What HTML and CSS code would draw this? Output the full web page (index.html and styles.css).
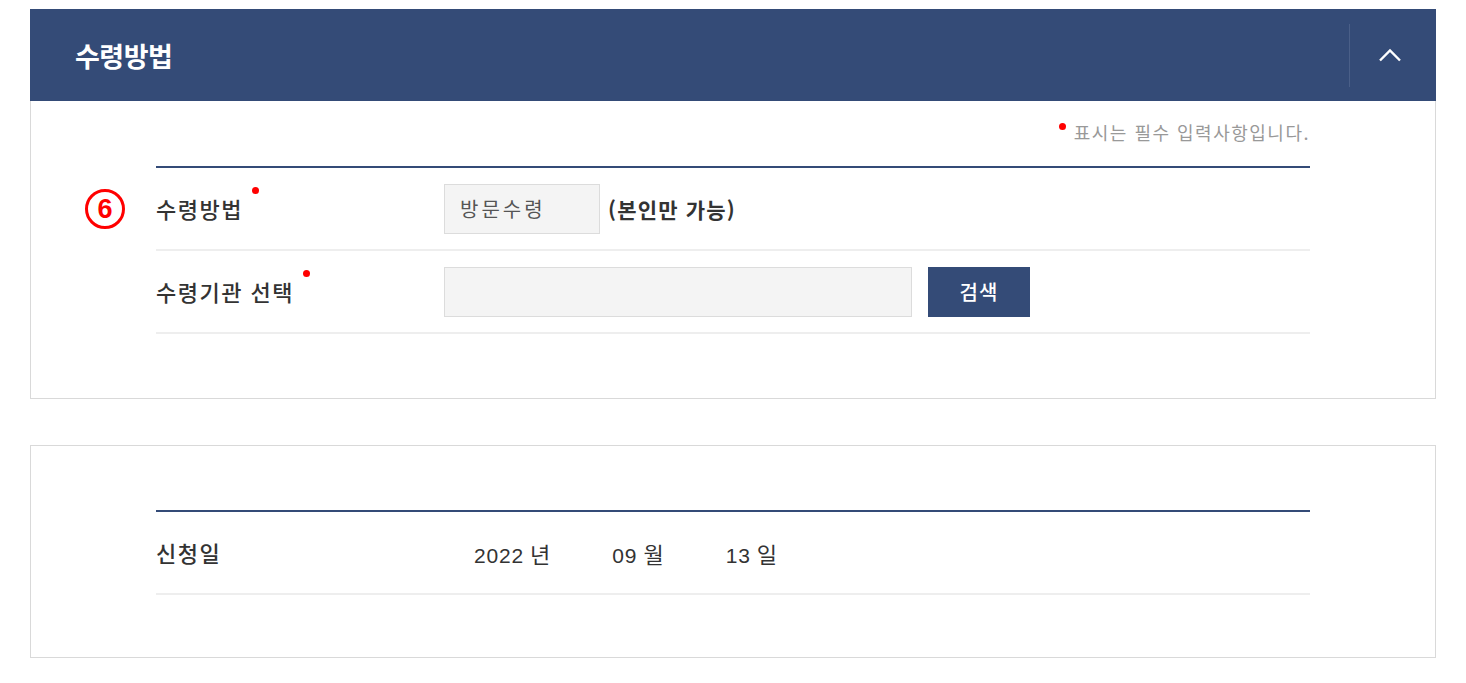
FILE: index.html
```html
<!DOCTYPE html>
<html lang="ko">
<head>
<meta charset="utf-8">
<title>수령방법</title>
<link rel="stylesheet" href="styles.css">
</head>
<body>
<div class="page">
  <section class="panel">
    <header class="panel-head">
      <h2 class="panel-title">수령방법</h2>
      <button class="toggle" type="button" aria-label="접기">
        <svg width="24" height="14" viewBox="0 0 24 14"><path d="M2 12.5 L12 2.5 L22 12.5" fill="none" stroke="#fff" stroke-width="2.4"/></svg>
      </button>
    </header>
    <div class="panel-body">
      <p class="notice"><span class="req"></span>표시는 필수 입력사항입니다.</p>
      <div class="form-table">
        <div class="row">
          <span class="step">6</span>
          <div class="label">수령방법<span class="req"></span></div>
          <div class="value">
            <div class="field field-sm">방문수령</div>
            <span class="hint">(본인만 가능)</span>
          </div>
        </div>
        <div class="row">
          <div class="label">수령기관 선택<span class="req"></span></div>
          <div class="value">
            <div class="field field-lg"></div>
            <button class="btn" type="button">검색</button>
          </div>
        </div>
      </div>
    </div>
  </section>

  <section class="panel panel-plain">
    <div class="panel-body">
      <div class="form-table">
        <div class="row">
          <div class="label">신청일</div>
          <div class="value date">
            <span class="date-part"><span class="num">2022</span> 년</span>
            <span class="date-part"><span class="num">09</span> 월</span>
            <span class="date-part"><span class="num">13</span> 일</span>
          </div>
        </div>
      </div>
    </div>
  </section>
</div>
</body>
</html>
```

FILE: styles.css
```css
* { box-sizing: border-box; }
body {
  margin: 0;
  background: #fff;
  font-family: "Noto Sans CJK KR", "Noto Sans", sans-serif;
  color: #333;
}
.page {
  padding: 9px 30px 0 30px;
  display: flex;
  flex-direction: column;
  gap: 46px;
}
.panel {
  border: 1px solid #d9d9d9;
  border-top: none;
  background: #fff;
}
.panel-plain {
  border-top: 1px solid #d9d9d9;
}
.panel-head {
  height: 92px;
  background: #344b77;
  display: flex;
  align-items: center;
  justify-content: space-between;
  padding-left: 45px;
  margin: 0 -1px;
}
.panel-title {
  margin: 0;
  color: #fff;
  font-size: 27px;
  font-weight: 700;
  letter-spacing: -0.5px;
}
.toggle {
  width: 87px;
  height: 63px;
  border: none;
  border-left: 1px solid #4a5f88;
  background: transparent;
  display: flex;
  align-items: center;
  justify-content: center;
  padding: 0 7px 0 0;
  cursor: pointer;
}
.panel-body {
  padding: 0 125px 64px 125px;
}
.panel-plain .panel-body {
  padding-top: 64px;
  padding-bottom: 62px;
}
.notice {
  margin: 0;
  height: 65px;
  padding-top: 19px;
  text-align: right;
  font-size: 18px;
  line-height: 1.4;
  color: #999;
  letter-spacing: 1.5px;
}
.req {
  display: inline-block;
  position: relative;
  width: 7px;
  height: 7px;
  border-radius: 50%;
  background: #f00;
  vertical-align: middle;
}
.label .req {
  margin-left: 9px;
  top: -22px;
}
.notice .req {
  margin-right: 8px;
  top: -9px;
}
.form-table {
  border-top: 2px solid #344b77;
}
.row {
  position: relative;
  display: flex;
  align-items: center;
  height: 83px;
  border-bottom: 2px solid #eeeeee;
}
.label {
  width: 288px;
  font-size: 22px;
  font-weight: 500;
  color: #333;
  letter-spacing: 1.5px;
  line-height: 1.2;
}
.value {
  display: flex;
  align-items: center;
  gap: 8px;
}
.field {
  height: 50px;
  background: #f4f4f4;
  border: 1px solid #dcdcdc;
  font-size: 20px;
  letter-spacing: 3px;
  color: #555;
  display: flex;
  align-items: center;
  padding-left: 15px;
}
.field-sm { width: 156px; }
.field-lg { width: 468px; margin-right: 8px; }
.hint {
  font-size: 21px;
  font-weight: 700;
  letter-spacing: 1.2px;
  color: #333;
}
.btn {
  width: 102px;
  height: 50px;
  background: #344b77;
  border: none;
  color: #fff;
  font-family: inherit;
  font-size: 20px;
  letter-spacing: 1px;
  font-weight: 500;
  cursor: pointer;
}
.step {
  position: absolute;
  left: -71px;
  top: 21px;
  width: 40px;
  height: 40px;
  border: 3px solid #f00;
  border-radius: 50%;
  color: #f00;
  font-family: "Liberation Sans", sans-serif;
  font-weight: 700;
  font-size: 27px;
  display: flex;
  align-items: center;
  justify-content: center;
}
.date {
  gap: 0;
  padding-left: 30px;
  font-size: 22px;
  color: #333;
}
.date-part {
  margin-right: 62px;
}
.num {
  font-family: "Liberation Sans", sans-serif;
  font-size: 21px;
  letter-spacing: 0.8px;
}
```
